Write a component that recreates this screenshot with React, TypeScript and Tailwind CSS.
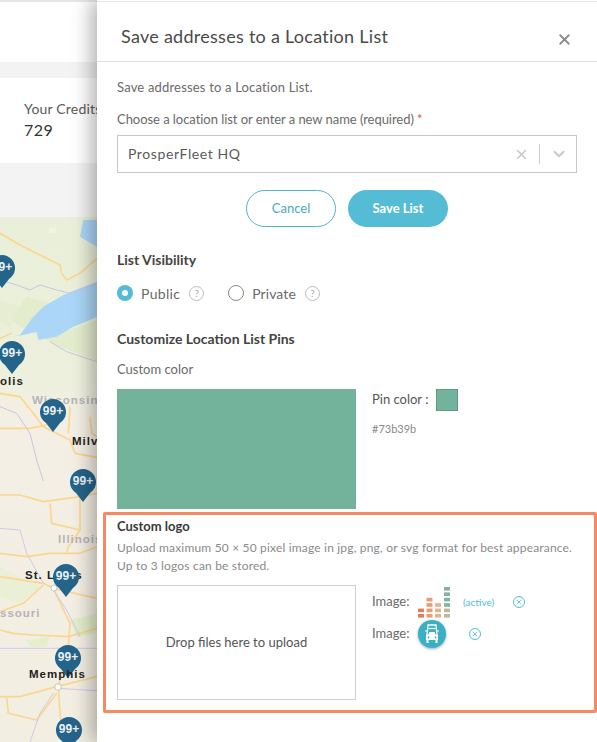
import { X, ChevronDown } from "lucide-react";

const PINS = [
  { x: 2, y: 268 },
  { x: 12, y: 354 },
  { x: 53, y: 412 },
  { x: 83, y: 482 },
  { x: 66, y: 577 },
  { x: 68, y: 658 },
  { x: 69, y: 730 },
];

const BARS = [
  { x: 0, rows: [4, 5], color: "#d9805f" },
  { x: 8.5, rows: [2, 3, 4, 5], color: "#ea9c70" },
  { x: 17, rows: [3, 4, 5], color: "#e3b58c" },
  { x: 26, rows: [0, 1, 2, 3], color: "#82b39e" },
  { x: 26, rows: [4, 5], color: "#bdb89c" },
];

function Pin({ x, y }: { x: number; y: number }) {
  return (
    <div
      className="absolute h-[34px] w-[28px] -translate-x-1/2 -translate-y-[14px]"
      style={{ left: x, top: y - 217 }}
    >
      <svg width="28" height="34" viewBox="0 0 28 34" className="absolute inset-0">
        <path d="M14 34 L7 25 A13 13 0 1 1 21 25 Z" fill="#25648a" />
      </svg>
      <span className="absolute inset-x-0 top-[6px] text-center font-['Liberation_Sans',sans-serif] text-[12px] leading-[14px] font-bold text-[#e8f0f4]">
        99+
      </span>
    </div>
  );
}

function MapLabel({ x, y, text, gray }: { x: number; y: number; text: string; gray?: boolean }) {
  return (
    <span
      className={
        gray
          ? "absolute font-['Liberation_Sans',sans-serif] text-[11.5px] leading-none font-bold tracking-[1px] text-[#b4b3b8]"
          : "absolute font-['Liberation_Sans',sans-serif] text-[11.5px] leading-none font-bold tracking-[1px] text-[#222222]"
      }
      style={{ left: x, top: y - 217 - 6 }}
    >
      {text}
    </span>
  );
}

function MapDrawing() {
  return (
    <svg className="absolute inset-0" width="97" height="525" viewBox="0 0 97 525">
      <defs>
        <linearGradient id="land" x1="0" y1="0" x2="0" y2="1">
          <stop offset="0" stopColor="#e9efd8" />
          <stop offset="0.3" stopColor="#ecf0dc" />
          <stop offset="0.38" stopColor="#f4efe4" />
          <stop offset="1" stopColor="#f3eee2" />
        </linearGradient>
      </defs>
      <rect width="97" height="525" fill="url(#land)" />
      <g transform="translate(0,3) scale(0.3333)" fill="none" strokeLinejoin="round">
        <path d="M80 230 L150 250 L210 330 L291 300 L291 420 L180 380 L100 340 L30 300 Z" fill="#e4ecce" />
        <path d="M0 240 L60 260 L30 320 L0 310 Z" fill="#e6edd2" />
        <path d="M150 20 L170 25 L165 40 L145 38 Z" fill="#f4f3e2" />
        <path d="M35 350 L60 345 L100 290 L130 260 L190 225 L240 205 L291 185 L291 290 L270 300 L220 320 L170 350 L115 360 L110 335 L70 345 Z" fill="#abd6f8" stroke="none" />
        <path d="M250 0 L240 50 L265 65 L291 80 L291 0 Z" fill="#abd6f8" stroke="none" />
        <g stroke="#fbd68f" strokeWidth="5">
          <path d="M0 40 L60 75 L140 115 L180 135 L185 160 L200 180 L240 160 L291 115" />
          <path d="M0 355 L35 340" />
          <path d="M0 520 L60 530 L100 580 L130 620 L210 660 L225 700 L291 712" />
          <path d="M0 625 L90 625 L140 615" />
          <path d="M210 560 L205 640" />
          <path d="M270 590 L275 640 L291 650" />
        </g>
        <g stroke="#cbc3e2" strokeWidth="3">
          <path d="M0 180 L50 195 L90 210 L120 195 L170 210 L210 220 L291 190" />
          <path d="M150 365 L200 395 L291 425" />
          <path d="M0 560 L50 580 L90 640 L110 720 L130 783" />
        </g>
      </g>
      <g transform="translate(0,263) scale(0.3333)" fill="none" strokeLinejoin="round">
        <path d="M0 260 L60 290 L120 320 L60 370 L0 350 Z" fill="#eaf0d6" />
        <path d="M80 480 L150 470 L140 500 L90 500 Z" fill="#e6efcd" />
        <path d="M210 420 L291 400 L291 460 L230 470 Z" fill="#e3edcb" />
        <g stroke="#fbd68f" strokeWidth="5">
          <path d="M0 45 L60 45 L130 65 L240 50 L291 40" />
          <path d="M150 70 L155 130 L240 150 L240 50" />
          <path d="M240 150 L205 200 L200 220" />
          <path d="M0 220 L80 230 L150 220 L240 220 L291 200" />
          <path d="M0 290 L130 310 L160 325 L291 355" />
          <path d="M160 325 L210 430 L205 500 L175 620 L180 700 L190 786" />
          <path d="M0 450 L40 460 L100 465 L205 470 L291 445" />
          <path d="M0 650 L60 650 L170 620 L291 590" />
          <path d="M0 395 L70 370 L130 315" />
          <path d="M20 650 L25 700 L110 720 L170 640" />
        </g>
        <g stroke="#cbc9ec" strokeWidth="3">
          <path d="M0 145 L60 150 L80 220 L130 310" />
          <path d="M0 505 L291 505" />
          <path d="M170 625 L291 632" />
          <path d="M160 330 L200 390 L240 470" />
          <path d="M160 640 L120 700 L90 786" />
        </g>
      </g>
      <circle cx="54" cy="371" r="3" fill="#fff" stroke="#999" strokeWidth="0.5" />
      <rect x="55" y="467" width="6" height="6" rx="2" fill="#fff" stroke="#999" strokeWidth="0.5" />
    </svg>
  );
}

function HelpDot() {
  return (
    <span className="flex h-[15px] w-[15px] items-center justify-center rounded-full border border-[#bdbdbd] text-[10px] leading-none text-[#a8a8a8]">
      ?
    </span>
  );
}

function RemoveIcon() {
  return (
    <span className="flex h-[12px] w-[12px] items-center justify-center rounded-full border border-[#55bcd6] text-[#55bcd6]">
      <X size={8} strokeWidth={2.5} />
    </span>
  );
}

function Equalizer() {
  return (
    <svg width="32" height="32" viewBox="0 0 32 32">
      {BARS.map((bar) =>
        bar.rows.map((row) => (
          <rect key={bar.x + "-" + row} x={bar.x} y={row * 5.4 + 1} width="6" height="3.6" fill={bar.color} />
        ))
      )}
    </svg>
  );
}

function TruckLogo() {
  return (
    <span className="flex h-[28px] w-[28px] items-center justify-center rounded-full bg-[#39b1c2] shadow-[0_1px_3px_rgba(0,0,0,0.35)]">
      <svg width="14" height="20" viewBox="0 0 14 20" fill="none">
        <path d="M3 1 H11 L12 11 H2 Z" stroke="#fff" strokeWidth="1.3" />
        <path d="M3.5 4.5 H10.5" stroke="#fff" strokeWidth="1.3" />
        <path d="M4 8 H10 V11 H4 Z" fill="#fff" />
        <path d="M1 11 H13 V16 H1 Z" fill="#fff" />
        <path d="M0 7 H2 M12 7 H14" stroke="#fff" strokeWidth="1.2" />
        <path d="M2.5 16 V19 M11.5 16 V19" stroke="#fff" strokeWidth="2" />
        <circle cx="3.5" cy="13.5" r="1" fill="#39b1c2" />
        <circle cx="10.5" cy="13.5" r="1" fill="#39b1c2" />
      </svg>
    </span>
  );
}

export default function App() {
  return (
    <div className="flex h-[742px] w-[597px] overflow-hidden bg-white font-['Lato',sans-serif] text-[13px] text-[#6a6a6a]">
      {/* Page behind the drawer */}
      <div className="flex w-[97px] shrink-0 flex-col overflow-hidden bg-[#f3f3f3]">
        <div className="h-[62px] shrink-0 border-t-2 border-[#e6e6e6] bg-white" />
        <div className="h-[16px] shrink-0" />
        <div className="h-[85px] w-[200px] shrink-0 bg-white pt-[21px] pl-[24px] text-[14px] leading-[20px] tracking-[0.2px] text-[#5a5a5a]">
          <p>Your Credits</p>
          <p className="text-[16px] leading-[22px] tracking-[0.5px] text-[#333333]">729</p>
        </div>
        <div className="h-[54px] shrink-0" />
        <div className="relative flex-1">
          <MapDrawing />
          <MapLabel x={0} y={382} text="olis" />
          <MapLabel x={32} y={401} text="Wisconsin" gray />
          <MapLabel x={72} y={442} text="Milv" />
          <MapLabel x={58} y={540} text="Illinois" gray />
          <MapLabel x={25} y={576} text="St. Louis" />
          <MapLabel x={0} y={614} text="ssouri" gray />
          {PINS.map((pin) => (
            <Pin key={pin.y} x={pin.x} y={pin.y} />
          ))}
          <MapLabel x={29} y={675} text="Memphis" />
        </div>
      </div>

      {/* Drawer */}
      <div className="relative z-10 flex flex-1 flex-col bg-white shadow-[-6px_0_18px_rgba(0,0,0,0.3)]">
        <div className="mt-[1px] flex h-[61px] shrink-0 items-center justify-between border-y border-t-[#e6e6e6] border-b-[#e0e0e0] pt-[9px] pr-[24px] pl-[24px]">
          <h1 className="text-[18px] tracking-[0.27px] text-[#4a4a4a]">Save addresses to a Location List</h1>
          <X size={17} strokeWidth={2.6} className="mt-[6px] text-[#8a8a8a]" />
        </div>

        <div className="flex flex-col px-[20px]">
          <p className="mt-[16px] leading-[18px] tracking-[0.18px]">Save addresses to a Location List.</p>
          <p className="mt-[14px] leading-[18px] tracking-[-0.05px]">
            Choose a location list or enter a new name (required) <span className="text-[#e2583e]">*</span>
          </p>

          <div className="mt-[7px] flex h-[38px] items-center border border-[#c8c8c8] pr-[6px] pl-[10px] text-[14px] tracking-[0.6px] text-[#5a5a5a]">
            <span className="flex-1 pb-[2px]">ProsperFleet HQ</span>
            <X size={15} strokeWidth={2.8} className="text-[#c9c9c9]" />
            <span className="mx-[10px] h-[20px] w-px bg-[#cccccc]" />
            <ChevronDown size={18} strokeWidth={2.6} className="mr-[2px] text-[#c9c9c9]" />
          </div>

          <div className="mt-[17px] flex justify-center gap-[12px]">
            <button className="h-[37px] w-[90px] rounded-full border border-[#4fb4cd] bg-white text-[#4aa9c2]">
              Cancel
            </button>
            <button className="h-[37px] w-[100px] rounded-full bg-[#55bcd6] font-bold text-white">Save List</button>
          </div>

          <h2 className="mt-[24px] text-[14px] leading-[18px] font-bold text-[#444444]">List Visibility</h2>

          <div className="mt-[15px] flex h-[18px] items-center text-[14px]">
            <span className="flex h-[16px] w-[16px] items-center justify-center rounded-full bg-[#55bcd6]">
              <span className="h-[6px] w-[6px] rounded-full bg-white" />
            </span>
            <span className="mr-[9px] ml-[8px] tracking-[0.3px]">Public</span>
            <HelpDot />
            <span className="ml-[24px] h-[16px] w-[16px] rounded-full border border-[#8a8a8a]" />
            <span className="mr-[9px] ml-[8px] tracking-[0.1px]">Private</span>
            <HelpDot />
          </div>

          <h2 className="mt-[28px] text-[14px] leading-[18px] font-bold text-[#444444]">
            Customize Location List Pins
          </h2>
          <p className="mt-[12px] leading-[18px]">Custom color</p>

          <div className="mt-[11px] flex gap-[16px]">
            <div className="h-[120px] w-[239px] bg-[#73b39b]" />
            <div className="flex flex-col">
              <div className="flex items-center gap-[8px]">
                <span className="text-[#555555]">Pin color :</span>
                <span className="h-[22px] w-[22px] border border-[#5f9a84] bg-[#73b39b]" />
              </div>
              <span className="mt-[10px] text-[11px] text-[#888888]">#73b39b</span>
            </div>
          </div>

          {/* Custom logo highlighted box */}
          <div className="mt-[3px] -mr-[20px] -ml-[14px] flex h-[201px] flex-col rounded-[2px] border-[3px] border-[#f58a62] pt-[2px] pr-[10px] pl-[11px]">
            <h2 className="text-[13px] leading-[18px] font-bold text-[#3a3a3a]">Custom logo</h2>
            <p className="mt-[4px] text-[12px] leading-[18px] tracking-[0.18px] text-[#8a8a8a]">
              Upload maximum 50 × 50 pixel image in jpg, png, or svg format for best appearance.
              <br />
              Up to 3 logos can be stored.
            </p>
            <div className="mt-[10px] flex gap-[16px]">
              <div className="flex h-[115px] w-[239px] items-center justify-center border border-[#cfcfcf] text-[#555555]">
                Drop files here to upload
              </div>
              <div className="flex flex-col pt-[1px]">
                <div className="flex h-[32px] items-center">
                  <span className="w-[46px]">Image:</span>
                  <Equalizer />
                  <span className="mr-[19px] ml-[13px] text-[10px] text-[#55bcd6]">(active)</span>
                  <RemoveIcon />
                </div>
                <div className="flex h-[32px] items-center">
                  <span className="w-[46px]">Image:</span>
                  <TruckLogo />
                  <span className="ml-[23px]">
                    <RemoveIcon />
                  </span>
                </div>
              </div>
            </div>
          </div>
        </div>
      </div>
    </div>
  );
}
